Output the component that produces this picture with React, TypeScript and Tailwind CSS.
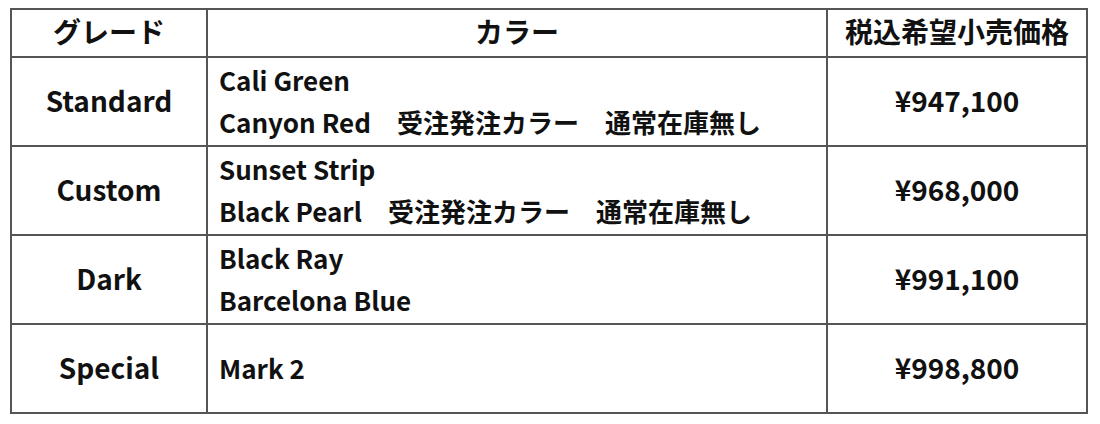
const rows = [
  { grade: 'Standard', colors: ['Cali Green', 'Canyon Red\u3000受注発注カラー\u3000通常在庫無し'], price: '¥947,100' },
  { grade: 'Custom', colors: ['Sunset Strip', 'Black Pearl\u3000受注発注カラー\u3000通常在庫無し'], price: '¥968,000' },
  { grade: 'Dark', colors: ['Black Ray', 'Barcelona Blue'], price: '¥991,100' },
  { grade: 'Special', colors: ['Mark 2'], price: '¥998,800' },
]

const cell = 'border-2 border-[#555555]'

export default function App() {
  return (
    <div
      className="w-[1100px] h-[424px] bg-white pt-[8px] pl-[10px] text-[#111111]"
      style={{ fontFamily: '"Noto Sans CJK JP", "Noto Sans", sans-serif' }}
    >
      <table className="table-fixed border-collapse w-[1078px] font-bold">
        <colgroup>
          <col className="w-[196px]" />
          <col className="w-[620px]" />
          <col className="w-[260px]" />
        </colgroup>
        <thead>
          <tr className="h-[48px] text-[28px] leading-[40px]">
            <th className={`${cell} pb-[4px] font-bold`}>グレード</th>
            <th className={`${cell} pb-[4px] font-bold`}>カラー</th>
            <th className={`${cell} pb-[4px] font-bold`}>税込希望小売価格</th>
          </tr>
        </thead>
        <tbody>
          {rows.map((r) => (
            <tr key={r.grade} className="h-[89px]">
              <td className={`${cell} pb-[4px] text-center text-[28px]`}>{r.grade}</td>
              <td className={`${cell} pb-[2px] pl-[11px] text-[26px] leading-[42px]`}>
                {r.colors.map((c) => (
                  <div key={c} className="whitespace-pre">{c}</div>
                ))}
              </td>
              <td className={`${cell} pb-[4px] text-center text-[28px]`}>{r.price}</td>
            </tr>
          ))}
        </tbody>
      </table>
    </div>
  )
}
